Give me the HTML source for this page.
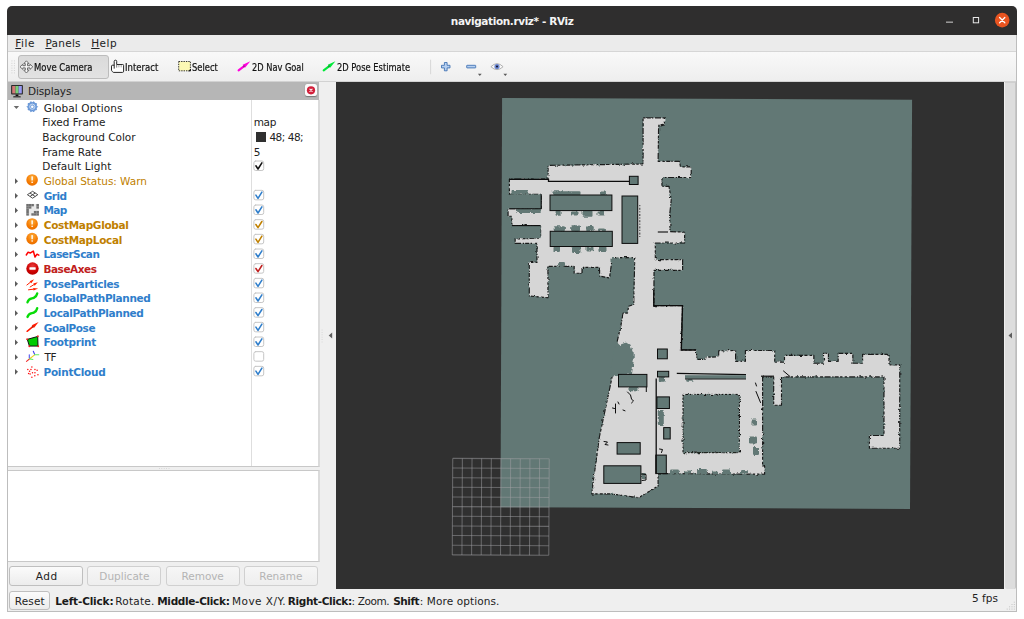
<!DOCTYPE html>
<html>
<head>
<meta charset="utf-8">
<title>navigation.rviz* - RViz</title>
<style>
html,body{margin:0;padding:0;background:#fff;}
body{width:1024px;height:619px;position:relative;overflow:hidden;font-family:"DejaVu Sans","Liberation Sans",sans-serif;font-size:10.5px;color:#222;}
.a{position:absolute;box-sizing:border-box;}
#win{left:7px;top:6px;width:1010px;height:606px;background:#efefef;border-radius:5px 5px 0 0;overflow:hidden;}
#title{left:0;top:0;width:1010px;height:29px;background:#2f2e2e;}
#menubar{left:0;top:29px;width:1010px;height:17px;background:#ebebeb;border-bottom:1px solid #d6d6d6;}
#toolbar{left:0;top:46px;width:1010px;height:30px;background:linear-gradient(#f9f9f9,#eeeeee);border-bottom:1px solid #d2d2d2;}
#view{left:336px;top:82px;width:668px;height:507px;background:#303030;}
#mapsvg,#iconsvg{position:absolute;left:0;top:0;width:1024px;height:619px;}
.btn{border:1px solid #bfbfbf;border-radius:3px;background:linear-gradient(#fbfbfb,#ececec);}
.btn.dis{border-color:#d0d0d0;background:linear-gradient(#f6f6f6,#eeeeee);}
.cb{width:10.6px;height:10.4px;left:253.4px;border:1px solid #c9c9c9;border-radius:2px;background:#fff;}
</style>
</head>
<body>
<div id="win" class="a">
  <div id="title" class="a"></div>
  <div id="menubar" class="a"></div>
  <div id="toolbar" class="a"></div>
</div>
<!-- window frame lines -->
<div class="a" style="left:7px;top:35px;width:1px;height:577px;background:#bdbdbd;"></div>
<div class="a" style="left:1016px;top:35px;width:1px;height:577px;background:#bdbdbd;"></div>
<div class="a" style="left:7px;top:611px;width:1010px;height:1px;background:#bdbdbd;"></div>
<!-- toolbar pressed button -->
<div class="a" style="left:18px;top:55px;width:91px;height:24px;border:1px solid #bcbcbc;border-radius:3px;background:linear-gradient(#dadada,#e2e2e2);"></div>
<!-- displays panel -->
<div class="a" style="left:8px;top:82px;width:311px;height:18px;background:#b6b6b6;"></div>
<div class="a" style="left:8px;top:100px;width:312px;height:367px;background:#fff;border-right:2px solid #dbdbdb;border-bottom:1px solid #c8c8c8;"></div>
<div class="a" style="left:251px;top:100px;width:1px;height:366px;background:#dedede;"></div>
<div class="a" style="left:305px;top:84px;width:12px;height:12px;background:#fafafa;border-radius:2px;box-shadow:0 0.5px 1px rgba(0,0,0,0.35);"></div>
<!-- description box -->
<div class="a" style="left:8px;top:470px;width:312px;height:92px;background:#fff;border-right:2px solid #dbdbdb;border-top:1px solid #c8c8c8;border-bottom:1px solid #c8c8c8;"></div>
<!-- buttons -->
<div class="a btn" style="left:9px;top:566px;width:74px;height:20px;"></div>
<div class="a btn dis" style="left:87px;top:566px;width:74px;height:20px;"></div>
<div class="a btn dis" style="left:166px;top:566px;width:74px;height:20px;"></div>
<div class="a btn dis" style="left:244px;top:566px;width:74px;height:20px;"></div>
<div class="a btn" style="left:9px;top:591px;width:41px;height:19px;"></div>
<!-- right collapsed strip -->
<div class="a" style="left:1005px;top:82px;width:11px;height:507px;background:#dddddd;border-top:1px solid #cfcfcf;border-right:1px solid #c6c6c6;border-radius:0 0 2px 2px;"></div>
<!-- colour swatch -->
<div class="a" style="left:256px;top:132px;width:10px;height:10px;background:#303030;"></div>
<div id="view" class="a"></div>
<svg style="position:absolute;left:0;top:0" width="1024" height="619" viewBox="0 0 1024 619" fill="none" stroke-linecap="round" stroke-linejoin="round">
<rect x="253.9" y="161.00" width="9.8" height="9.5" rx="1.8" fill="#fff" stroke="#c6c6c6" stroke-width="1"/>
<path d="M255.9,165.80 L258,169.00 L261.9,162.80" stroke="#111" stroke-width="1.55"/>
<rect x="253.9" y="190.33" width="9.8" height="9.5" rx="1.8" fill="#fff" stroke="#c6c6c6" stroke-width="1"/>
<path d="M255.9,195.13 L258,198.33 L261.9,192.13" stroke="#2f7ecb" stroke-width="1.55"/>
<rect x="253.9" y="205.00" width="9.8" height="9.5" rx="1.8" fill="#fff" stroke="#c6c6c6" stroke-width="1"/>
<path d="M255.9,209.80 L258,213.00 L261.9,206.80" stroke="#2f7ecb" stroke-width="1.55"/>
<rect x="253.9" y="219.67" width="9.8" height="9.5" rx="1.8" fill="#fff" stroke="#c6c6c6" stroke-width="1"/>
<path d="M255.9,224.47 L258,227.67 L261.9,221.47" stroke="#c08000" stroke-width="1.55"/>
<rect x="253.9" y="234.33" width="9.8" height="9.5" rx="1.8" fill="#fff" stroke="#c6c6c6" stroke-width="1"/>
<path d="M255.9,239.13 L258,242.33 L261.9,236.13" stroke="#c08000" stroke-width="1.55"/>
<rect x="253.9" y="249.00" width="9.8" height="9.5" rx="1.8" fill="#fff" stroke="#c6c6c6" stroke-width="1"/>
<path d="M255.9,253.80 L258,257.00 L261.9,250.80" stroke="#2f7ecb" stroke-width="1.55"/>
<rect x="253.9" y="263.67" width="9.8" height="9.5" rx="1.8" fill="#fff" stroke="#c6c6c6" stroke-width="1"/>
<path d="M255.9,268.47 L258,271.67 L261.9,265.47" stroke="#c02020" stroke-width="1.55"/>
<rect x="253.9" y="278.34" width="9.8" height="9.5" rx="1.8" fill="#fff" stroke="#c6c6c6" stroke-width="1"/>
<path d="M255.9,283.14 L258,286.34 L261.9,280.14" stroke="#2f7ecb" stroke-width="1.55"/>
<rect x="253.9" y="293.00" width="9.8" height="9.5" rx="1.8" fill="#fff" stroke="#c6c6c6" stroke-width="1"/>
<path d="M255.9,297.80 L258,301.00 L261.9,294.80" stroke="#2f7ecb" stroke-width="1.55"/>
<rect x="253.9" y="307.67" width="9.8" height="9.5" rx="1.8" fill="#fff" stroke="#c6c6c6" stroke-width="1"/>
<path d="M255.9,312.47 L258,315.67 L261.9,309.47" stroke="#2f7ecb" stroke-width="1.55"/>
<rect x="253.9" y="322.34" width="9.8" height="9.5" rx="1.8" fill="#fff" stroke="#c6c6c6" stroke-width="1"/>
<path d="M255.9,327.14 L258,330.34 L261.9,324.14" stroke="#2f7ecb" stroke-width="1.55"/>
<rect x="253.9" y="337.00" width="9.8" height="9.5" rx="1.8" fill="#fff" stroke="#c6c6c6" stroke-width="1"/>
<path d="M255.9,341.80 L258,345.00 L261.9,338.80" stroke="#2f7ecb" stroke-width="1.55"/>
<rect x="253.9" y="351.67" width="9.8" height="9.5" rx="1.8" fill="#fff" stroke="#c6c6c6" stroke-width="1"/>
<rect x="253.9" y="366.34" width="9.8" height="9.5" rx="1.8" fill="#fff" stroke="#c6c6c6" stroke-width="1"/>
<path d="M255.9,371.14 L258,374.34 L261.9,368.14" stroke="#2f7ecb" stroke-width="1.55"/>
</svg>
<style>
.t{position:absolute;white-space:nowrap;line-height:14px;font-family:'DejaVu Sans','Liberation Sans',sans-serif;color:#222222;}
u{text-decoration:underline;text-underline-offset:0.8px;text-decoration-thickness:1px;}
</style>
<div class="t" id="t0" style="left:450.80px;top:13.50px;font-size:10.5px;font-weight:700;color:#f4f4f4;letter-spacing:-0.390px;">navigation.rviz* - RViz</div>
<div class="t" id="t1" style="left:15.30px;top:35.90px;font-size:10.5px;letter-spacing:0.500px;"><u>F</u>ile</div>
<div class="t" id="t2" style="left:45.40px;top:35.90px;font-size:10.5px;letter-spacing:0.269px;"><u>P</u>anels</div>
<div class="t" id="t3" style="left:91.20px;top:35.90px;font-size:10.5px;letter-spacing:0.468px;"><u>H</u>elp</div>
<div class="t" id="t4" style="left:33.72px;top:60.50px;font-size:10.1px;font-family:'DejaVu Sans Condensed','DejaVu Sans','Liberation Sans',sans-serif;transform:scaleX(0.9291);transform-origin:0 0;color:#111;-webkit-text-stroke:0.2px #111;">Move Camera</div>
<div class="t" id="t5" style="left:125.12px;top:60.50px;font-size:10.1px;font-family:'DejaVu Sans Condensed','DejaVu Sans','Liberation Sans',sans-serif;transform:scaleX(0.9389);transform-origin:0 0;color:#111;-webkit-text-stroke:0.2px #111;">Interact</div>
<div class="t" id="t6" style="left:192.02px;top:60.50px;font-size:10.1px;font-family:'DejaVu Sans Condensed','DejaVu Sans','Liberation Sans',sans-serif;transform:scaleX(0.9231);transform-origin:0 0;color:#111;-webkit-text-stroke:0.2px #111;">Select</div>
<div class="t" id="t7" style="left:251.92px;top:60.50px;font-size:10.1px;font-family:'DejaVu Sans Condensed','DejaVu Sans','Liberation Sans',sans-serif;transform:scaleX(0.9079);transform-origin:0 0;color:#111;-webkit-text-stroke:0.2px #111;">2D Nav Goal</div>
<div class="t" id="t8" style="left:337.12px;top:60.50px;font-size:10.1px;font-family:'DejaVu Sans Condensed','DejaVu Sans','Liberation Sans',sans-serif;transform:scaleX(0.9181);transform-origin:0 0;color:#111;-webkit-text-stroke:0.2px #111;">2D Pose Estimate</div>
<div class="t" id="t9" style="left:27.90px;top:84.00px;font-size:10.5px;letter-spacing:-0.097px;">Displays</div>
<div class="t" id="t10" style="left:43.69px;top:100.50px;font-size:10.5px;letter-spacing:0.111px;">Global Options</div>
<div class="t" id="t11" style="left:42.20px;top:115.17px;font-size:10.5px;letter-spacing:0.008px;">Fixed Frame</div>
<div class="t" id="t12" style="left:42.20px;top:129.83px;font-size:10.5px;">Background Color</div>
<div class="t" id="t13" style="left:42.20px;top:144.50px;font-size:10.5px;letter-spacing:-0.080px;">Frame Rate</div>
<div class="t" id="t14" style="left:42.20px;top:159.17px;font-size:10.5px;letter-spacing:0.104px;">Default Light</div>
<div class="t" id="t15" style="left:43.69px;top:173.83px;font-size:10.5px;color:#c08000;letter-spacing:-0.050px;">Global Status: Warn</div>
<div class="t" id="t16" style="left:43.79px;top:188.50px;font-size:10.5px;font-weight:700;color:#2f7ecb;letter-spacing:-0.527px;">Grid</div>
<div class="t" id="t17" style="left:43.44px;top:203.17px;font-size:10.5px;font-weight:700;color:#2f7ecb;letter-spacing:-0.600px;">Map</div>
<div class="t" id="t18" style="left:43.79px;top:217.84px;font-size:10.5px;font-weight:700;color:#c08000;letter-spacing:-0.312px;">CostMapGlobal</div>
<div class="t" id="t19" style="left:43.79px;top:232.50px;font-size:10.5px;font-weight:700;color:#c08000;letter-spacing:-0.323px;">CostMapLocal</div>
<div class="t" id="t20" style="left:43.44px;top:247.17px;font-size:10.5px;font-weight:700;color:#2f7ecb;letter-spacing:-0.532px;">LaserScan</div>
<div class="t" id="t21" style="left:43.44px;top:261.84px;font-size:10.5px;font-weight:700;color:#c02020;letter-spacing:-0.452px;">BaseAxes</div>
<div class="t" id="t22" style="left:43.44px;top:276.50px;font-size:10.5px;font-weight:700;color:#2f7ecb;letter-spacing:-0.305px;">PoseParticles</div>
<div class="t" id="t23" style="left:43.79px;top:291.17px;font-size:10.5px;font-weight:700;color:#2f7ecb;letter-spacing:-0.346px;">GlobalPathPlanned</div>
<div class="t" id="t24" style="left:43.44px;top:305.84px;font-size:10.5px;font-weight:700;color:#2f7ecb;letter-spacing:-0.357px;">LocalPathPlanned</div>
<div class="t" id="t25" style="left:43.79px;top:320.50px;font-size:10.5px;font-weight:700;color:#2f7ecb;letter-spacing:-0.439px;">GoalPose</div>
<div class="t" id="t26" style="left:43.44px;top:335.17px;font-size:10.5px;font-weight:700;color:#2f7ecb;letter-spacing:-0.281px;">Footprint</div>
<div class="t" id="t27" style="left:44.44px;top:349.84px;font-size:10.5px;letter-spacing:-0.357px;">TF</div>
<div class="t" id="t28" style="left:43.44px;top:364.51px;font-size:10.5px;font-weight:700;color:#2f7ecb;letter-spacing:-0.244px;">PointCloud</div>
<div class="t" id="t29" style="left:253.64px;top:115.17px;font-size:10.5px;letter-spacing:-0.238px;">map</div>
<div class="t" id="t30" style="left:269.43px;top:129.83px;font-size:10.5px;letter-spacing:-0.483px;">48; 48;</div>
<div class="t" id="t31" style="left:253.80px;top:144.50px;font-size:10.5px;">5</div>
<div class="t" id="t32" style="left:35.74px;top:568.90px;font-size:10.5px;letter-spacing:0.500px;">Add</div>
<div class="t" id="t33" style="left:99.30px;top:568.90px;font-size:10.5px;color:#b4b4b4;letter-spacing:0.013px;">Duplicate</div>
<div class="t" id="t34" style="left:181.60px;top:568.90px;font-size:10.5px;color:#b4b4b4;letter-spacing:-0.075px;">Remove</div>
<div class="t" id="t35" style="left:259.30px;top:568.90px;font-size:10.5px;color:#b4b4b4;letter-spacing:0.021px;">Rename</div>
<div class="t" id="t36" style="left:14.70px;top:593.80px;font-size:10.5px;letter-spacing:0.168px;">Reset</div>
<div class="t" id="t37" style="left:55.24px;top:593.80px;font-size:10.5px;font-weight:700;color:#1a1a1a;letter-spacing:-0.170px;">Left-Click:</div>
<div class="t" id="t38" style="left:115.30px;top:593.80px;font-size:10.5px;letter-spacing:0.214px;">Rotate.</div>
<div class="t" id="t39" style="left:157.24px;top:593.80px;font-size:10.5px;font-weight:700;color:#1a1a1a;letter-spacing:-0.321px;">Middle-Click:</div>
<div class="t" id="t40" style="left:232.00px;top:593.80px;font-size:10.5px;letter-spacing:0.473px;">Move X/Y.</div>
<div class="t" id="t41" style="left:287.84px;top:593.80px;font-size:10.5px;font-weight:700;color:#1a1a1a;letter-spacing:-0.369px;">Right-Click:</div>
<div class="t" id="t42" style="left:351.57px;top:593.80px;font-size:10.5px;letter-spacing:-0.395px;">: Zoom.</div>
<div class="t" id="t43" style="left:393.17px;top:593.80px;font-size:10.5px;font-weight:700;color:#1a1a1a;letter-spacing:-0.444px;">Shift</div>
<div class="t" id="t44" style="left:419.77px;top:593.80px;font-size:10.5px;letter-spacing:0.101px;">: More options.</div>
<div class="t" id="t45" style="left:972.10px;top:591.30px;font-size:10.5px;letter-spacing:-0.010px;">5 fps</div>
<svg id="iconsvg" viewBox="0 0 1024 619" width="1024" height="619">
<defs>
<radialGradient id="gw" cx="0.5" cy="0.3" r="0.8"><stop offset="0" stop-color="#fcaf3e"/><stop offset="0.6" stop-color="#f57900"/><stop offset="1" stop-color="#e06a00"/></radialGradient>
<radialGradient id="ge" cx="0.5" cy="0.3" r="0.8"><stop offset="0" stop-color="#e83a3a"/><stop offset="0.6" stop-color="#cc0000"/><stop offset="1" stop-color="#a80000"/></radialGradient>
</defs>
<rect x="946" y="21.6" width="7" height="1.1" fill="#c4c4c4"/>
<rect x="973.3" y="17.5" width="5.3" height="5.3" fill="none" stroke="#e8e8e8" stroke-width="1"/>
<circle cx="1002.2" cy="20.1" r="7.3" fill="#e95420"/>
<path d="M999.6,17.5 L1004.8,22.7 M1004.8,17.5 L999.6,22.7" stroke="#fff" stroke-width="1.3" stroke-linecap="round"/>
<rect x="11.4" y="60.4" width="1" height="1" fill="#d2d2d2"/>
<rect x="13.9" y="60.4" width="1" height="1" fill="#d2d2d2"/>
<rect x="11.4" y="62.8" width="1" height="1" fill="#d2d2d2"/>
<rect x="13.9" y="62.8" width="1" height="1" fill="#d2d2d2"/>
<rect x="11.4" y="65.2" width="1" height="1" fill="#d2d2d2"/>
<rect x="13.9" y="65.2" width="1" height="1" fill="#d2d2d2"/>
<rect x="11.4" y="67.6" width="1" height="1" fill="#d2d2d2"/>
<rect x="13.9" y="67.6" width="1" height="1" fill="#d2d2d2"/>
<rect x="11.4" y="70.0" width="1" height="1" fill="#d2d2d2"/>
<rect x="13.9" y="70.0" width="1" height="1" fill="#d2d2d2"/>
<rect x="11.4" y="72.4" width="1" height="1" fill="#d2d2d2"/>
<rect x="13.9" y="72.4" width="1" height="1" fill="#d2d2d2"/>
<g transform="translate(26.4,66.8)" fill="#f6f6f6" stroke="#6c6c6c" stroke-width="1" stroke-linejoin="round"><path d="M0,-6 L2.6,-3.2 L1.1,-3.2 L1.1,-1.1 L3.6,-1.1 L3.6,-2.6 L6.4,0 L3.6,2.6 L3.6,1.1 L1.1,1.1 L1.1,3.4 L2.6,3.4 L0,6.2 L-2.6,3.4 L-1.1,3.4 L-1.1,1.1 L-3.6,1.1 L-3.6,2.6 L-6.4,0 L-3.6,-2.6 L-3.6,-1.1 L-1.1,-1.1 L-1.1,-3.2 L-2.6,-3.2 Z"/></g>
<g fill="#fff" stroke="#262626" stroke-width="1" stroke-linejoin="round"><path d="M114.2,65.2 L114.2,61.3 Q114.2,60.2 115.45,60.2 Q116.7,60.2 116.7,61.3 L116.7,64.5 L122.7,64.5 Q123.6,64.5 123.6,65.4 L123.6,71.2 Q123.6,72.4 122.6,72.4 L113.6,72.4 Q112.8,72.4 112.5,71.7 L111.5,70.3 L111.5,66.1 Q111.5,65.2 112.6,65.2 Z"/><path d="M114.2,65 V68.6" fill="none"/><path d="M116.7,64.6 V67.6" fill="none" stroke="#555" stroke-width="0.8"/><path d="M118.9,64.8 V67.4 M121.2,64.8 V67.4" fill="none" stroke="#8a8a8a" stroke-width="0.8"/></g>
<rect x="178.7" y="61.5" width="11.7" height="9.3" fill="#fcf8b4" stroke="#222" stroke-width="0.9" stroke-dasharray="1.4 1"/>
<path d="M190.9,68.6 L190.9,71.3 L188.2,71.3 Z" fill="#111"/>
<path d="M238.60,70.40 L243.87,66.31" stroke="#ff00dd" stroke-width="2.1" stroke-linecap="round"/><path d="M250.30,61.30 L245.03,67.80 L242.70,64.81 Z" fill="#ff00dd"/><circle cx="243.87" cy="66.31" r="1.1" fill="#70206a" opacity="0.55"/>
<path d="M323.70,70.40 L328.96,66.31" stroke="#00e838" stroke-width="2.1" stroke-linecap="round"/><path d="M335.40,61.30 L330.13,67.80 L327.80,64.81 Z" fill="#00e838"/><circle cx="328.96" cy="66.31" r="1.1" fill="#207030" opacity="0.55"/>
<rect x="430.2" y="59.7" width="0.9" height="14.5" fill="#d4d4d4"/>
<path d="M444.4,62.5 h2.7 v2.8 h2.9 v2.6 h-2.9 v2.9 h-2.7 v-2.9 h-2.9 v-2.6 h2.9 z" fill="#b7d0f0" stroke="#3a6db0" stroke-width="0.85" stroke-linejoin="round"/>
<rect x="466.7" y="65.3" width="9" height="2.6" rx="0.4" fill="#b7d0f0" stroke="#3a6db0" stroke-width="0.85"/>
<path d="M477.9,73.7 h3.8 l-1.9,2.3 z" fill="#5a5a5a"/>
<path d="M503.4,73.7 h3.8 l-1.9,2.3 z" fill="#5a5a5a"/>
<path d="M490.9,66.7 Q497,60.6 503.1,66.7 Q497,72.6 490.9,66.7 Z" fill="#f8f8f8" stroke="#a8a8a8" stroke-width="0.9"/>
<circle cx="497" cy="66.5" r="2.6" fill="#6a86cf"/>
<circle cx="497" cy="66.5" r="1.05" fill="#10102a"/>
<rect x="11.1" y="84.9" width="11.8" height="9.6" rx="0.8" fill="#2a2a2a"/>
<rect x="12.2" y="86" width="3.3" height="7.4" fill="#d27878"/>
<rect x="15.5" y="86" width="3.1" height="7.4" fill="#78d078"/>
<rect x="18.6" y="86" width="3.2" height="7.4" fill="#9a9af4"/>
<rect x="15.6" y="94.5" width="2.8" height="1.6" fill="#111"/>
<rect x="13.2" y="96.1" width="7.6" height="1.5" rx="0.6" fill="#444"/>
<circle cx="311" cy="90.3" r="4.1" fill="#d21f3a"/>
<path d="M309.9,89.2 L312.1,91.4 M312.1,89.2 L309.9,91.4" stroke="#fff" stroke-width="1.1" stroke-linecap="round"/>
<path d="M328.7,335.4 L332.2,332.4 L332.2,338.4 Z" fill="#5e5e5e"/>
<path d="M1008.5,335.4 L1012,332.4 L1012,338.4 Z" fill="#5e5e5e"/>
<rect x="321.4" y="329.6" width="1.4" height="0.8" fill="#dadada"/>
<rect x="321.4" y="332.0" width="1.4" height="0.8" fill="#dadada"/>
<rect x="321.4" y="334.4" width="1.4" height="0.8" fill="#dadada"/>
<rect x="321.4" y="336.8" width="1.4" height="0.8" fill="#dadada"/>
<rect x="321.4" y="339.2" width="1.4" height="0.8" fill="#dadada"/>
<rect x="321.4" y="341.6" width="1.4" height="0.8" fill="#dadada"/>
<rect x="159.0" y="468" width="0.8" height="0.9" fill="#cfcfcf"/>
<rect x="161.4" y="468" width="0.8" height="0.9" fill="#cfcfcf"/>
<rect x="163.8" y="468" width="0.8" height="0.9" fill="#cfcfcf"/>
<rect x="166.2" y="468" width="0.8" height="0.9" fill="#cfcfcf"/>
<rect x="168.6" y="468" width="0.8" height="0.9" fill="#cfcfcf"/>
<path d="M13.7,105.9 L19.1,105.9 L16.4,109 Z" fill="#6a6a6a"/>
<path d="M15,178.23 L18,181.13 L15,184.03 Z" fill="#5c5c5c"/>
<path d="M15,192.90 L18,195.80 L15,198.70 Z" fill="#5c5c5c"/>
<path d="M15,207.57 L18,210.47 L15,213.37 Z" fill="#5c5c5c"/>
<path d="M15,222.24 L18,225.14 L15,228.04 Z" fill="#5c5c5c"/>
<path d="M15,236.90 L18,239.80 L15,242.70 Z" fill="#5c5c5c"/>
<path d="M15,251.57 L18,254.47 L15,257.37 Z" fill="#5c5c5c"/>
<path d="M15,266.24 L18,269.14 L15,272.04 Z" fill="#5c5c5c"/>
<path d="M15,280.90 L18,283.80 L15,286.70 Z" fill="#5c5c5c"/>
<path d="M15,295.57 L18,298.47 L15,301.37 Z" fill="#5c5c5c"/>
<path d="M15,310.24 L18,313.14 L15,316.04 Z" fill="#5c5c5c"/>
<path d="M15,324.91 L18,327.80 L15,330.70 Z" fill="#5c5c5c"/>
<path d="M15,339.57 L18,342.47 L15,345.37 Z" fill="#5c5c5c"/>
<path d="M15,354.24 L18,357.14 L15,360.04 Z" fill="#5c5c5c"/>
<path d="M15,368.91 L18,371.81 L15,374.71 Z" fill="#5c5c5c"/>
<polygon points="37.60,106.70 36.29,108.00 36.59,109.82 34.77,110.10 33.94,111.74 32.30,110.90 30.66,111.74 29.83,110.10 28.01,109.82 28.31,108.00 27.00,106.70 28.31,105.40 28.01,103.58 29.83,103.30 30.66,101.66 32.30,102.50 33.94,101.66 34.77,103.30 36.59,103.58 36.29,105.40" fill="#6f9ddb" stroke="#4a7fcb" stroke-width="0.6"/>
<circle cx="32.3" cy="106.7" r="2.6" fill="none" stroke="#dbe6f6" stroke-width="0.8"/>
<circle cx="32.3" cy="106.7" r="1.3" fill="#fff"/>
<circle cx="32.1" cy="179.93" r="5.8" fill="url(#gw)"/>
<rect x="31.4" y="176.33" width="1.5" height="4.2" rx="0.5" fill="#fff" opacity="0.95"/>
<rect x="31.4" y="181.53" width="1.5" height="1.5" rx="0.4" fill="#fff" opacity="0.95"/>
<circle cx="32.1" cy="223.94" r="5.8" fill="url(#gw)"/>
<rect x="31.4" y="220.34" width="1.5" height="4.2" rx="0.5" fill="#fff" opacity="0.95"/>
<rect x="31.4" y="225.54" width="1.5" height="1.5" rx="0.4" fill="#fff" opacity="0.95"/>
<circle cx="32.1" cy="238.60" r="5.8" fill="url(#gw)"/>
<rect x="31.4" y="235.00" width="1.5" height="4.2" rx="0.5" fill="#fff" opacity="0.95"/>
<rect x="31.4" y="240.20" width="1.5" height="1.5" rx="0.4" fill="#fff" opacity="0.95"/>
<g fill="none" stroke="#3c3c3c" stroke-width="0.9" stroke-linejoin="round"><path d="M27.4,194.70 L32.6,191.30 L37.8,194.70 L32.6,198.20 Z"/><path d="M30,193.00 L35.2,196.50 M35.2,193.00 L30,196.50"/></g>
<rect x="26.3" y="203.97" width="12.6" height="11.6" fill="#e9e9e9"/>
<rect x="26.30" y="203.97" width="2.55" height="2.35" fill="#707070"/>
<rect x="28.82" y="203.97" width="2.55" height="2.35" fill="#707070"/>
<rect x="31.34" y="203.97" width="2.55" height="2.35" fill="#707070"/>
<rect x="36.38" y="203.97" width="2.55" height="2.35" fill="#707070"/>
<rect x="26.30" y="206.29" width="2.55" height="2.35" fill="#707070"/>
<rect x="28.82" y="206.29" width="2.55" height="2.35" fill="#707070"/>
<rect x="36.38" y="206.29" width="2.55" height="2.35" fill="#707070"/>
<rect x="26.30" y="208.61" width="2.55" height="2.35" fill="#707070"/>
<rect x="26.30" y="210.93" width="2.55" height="2.35" fill="#707070"/>
<rect x="33.86" y="210.93" width="2.55" height="2.35" fill="#707070"/>
<rect x="36.38" y="210.93" width="2.55" height="2.35" fill="#707070"/>
<rect x="26.30" y="213.25" width="2.55" height="2.35" fill="#707070"/>
<rect x="31.34" y="213.25" width="2.55" height="2.35" fill="#707070"/>
<rect x="33.86" y="213.25" width="2.55" height="2.35" fill="#707070"/>
<rect x="36.38" y="213.25" width="2.55" height="2.35" fill="#707070"/>
<path d="M26.3,254.97 L28.1,252.17 L30.5,252.97 L33.3,251.07 L35,256.97 L37,254.17 L38.8,255.17" fill="none" stroke="#f00" stroke-width="1.5" stroke-linejoin="round" stroke-linecap="round"/>
<circle cx="32.5" cy="268.54" r="6.2" fill="url(#ge)"/>
<rect x="29.4" y="267.34" width="6.3" height="2.3" rx="0.4" fill="#fff"/>
<path d="M26.90,285.00 L30.50,282.15" stroke="#ff2000" stroke-width="1.0" stroke-linecap="round"/><path d="M34.10,279.30 L31.31,283.17 L29.69,281.13 Z" fill="#ff2000"/>
<path d="M30.10,287.00 L33.95,284.60" stroke="#ff2000" stroke-width="1.0" stroke-linecap="round"/><path d="M37.80,282.20 L34.64,285.71 L33.26,283.50 Z" fill="#ff2000"/>
<path d="M28.50,289.80 L33.35,289.20" stroke="#ff2000" stroke-width="1.0" stroke-linecap="round"/><path d="M38.20,288.60 L33.51,290.49 L33.19,287.91 Z" fill="#ff2000"/>
<path d="M27.5,302.27 C28.8,297.87 31.5,298.87 33.8,297.87 C36,296.87 36.8,295.47 37.2,293.47" fill="none" stroke="#08dc08" stroke-width="2.4" stroke-linecap="round"/>
<path d="M27.5,316.94 C28.8,312.54 31.5,313.54 33.8,312.54 C36,311.54 36.8,310.14 37.2,308.14" fill="none" stroke="#08dc08" stroke-width="2.4" stroke-linecap="round"/>
<path d="M27.10,331.31 L32.85,326.65" stroke="#ff1a00" stroke-width="1.5" stroke-linecap="round"/><path d="M38.60,322.00 L33.92,327.98 L31.78,325.33 Z" fill="#ff1a00"/>
<circle cx="32.6" cy="326.81" r="0.9" fill="#802010" opacity="0.6"/>
<polygon points="27.3,339.37 37.7,336.47 38,346.07 29.4,346.07" fill="#00cc00" stroke="#101010" stroke-width="1" stroke-linejoin="round"/>
<circle cx="27.10" cy="339.17" r="0.9" fill="#f02020"/>
<circle cx="37.90" cy="336.27" r="0.9" fill="#f02020"/>
<circle cx="38.20" cy="346.27" r="0.9" fill="#f02020"/>
<circle cx="29.30" cy="346.27" r="0.9" fill="#f02020"/>
<g stroke-width="1.1" stroke-linecap="round" fill="none" transform="translate(0,-0.99)"><path d="M26.5,362.3 L29.7,359.7" stroke="#f03030"/><path d="M29.7,359.7 L34.6,355.8" stroke="#f0d020"/><path d="M29.3,355.8 L29.3,359.1" stroke="#5050f0"/><path d="M33.3,352.2 L34.6,355.2" stroke="#4040f0"/><path d="M34.6,355.8 L38.8,355.8" stroke="#60f060"/><path d="M29.7,359.9 L32.9,360.5" stroke="#60f060"/></g>
<circle cx="31.88" cy="366.98" r="0.75" fill="#ff1010"/>
<circle cx="27.84" cy="369.41" r="0.75" fill="#ff1010"/>
<circle cx="30.91" cy="369.57" r="0.75" fill="#ff1010"/>
<circle cx="34.96" cy="369.41" r="0.75" fill="#ff1010"/>
<circle cx="37.14" cy="370.22" r="0.75" fill="#ff1010"/>
<circle cx="29.54" cy="371.35" r="0.75" fill="#ff1010"/>
<circle cx="32.53" cy="372.64" r="0.75" fill="#ff1010"/>
<circle cx="34.96" cy="372.80" r="0.75" fill="#ff1010"/>
<circle cx="28.65" cy="373.61" r="0.75" fill="#ff1010"/>
<circle cx="30.11" cy="374.02" r="0.75" fill="#ff1010"/>
<circle cx="37.95" cy="374.82" r="0.75" fill="#ff1010"/>
<circle cx="34.79" cy="375.79" r="0.75" fill="#ff1010"/>
<circle cx="31.88" cy="377.25" r="0.75" fill="#ff1010"/>
<rect x="1013.8" y="601.7" width="1" height="1" fill="#c4c4c4"/>
<rect x="1011.5" y="604.0" width="1" height="1" fill="#c4c4c4"/>
<rect x="1013.8" y="604.0" width="1" height="1" fill="#c4c4c4"/>
<rect x="1009.1" y="606.3" width="1" height="1" fill="#c4c4c4"/>
<rect x="1011.5" y="606.3" width="1" height="1" fill="#c4c4c4"/>
<rect x="1013.8" y="606.3" width="1" height="1" fill="#c4c4c4"/>
<rect x="1006.7" y="608.6" width="1" height="1" fill="#c4c4c4"/>
<rect x="1009.1" y="608.6" width="1" height="1" fill="#c4c4c4"/>
<rect x="1011.5" y="608.6" width="1" height="1" fill="#c4c4c4"/>
<rect x="1013.8" y="608.6" width="1" height="1" fill="#c4c4c4"/>
</svg>
<svg id="mapsvg" viewBox="0 0 1024 619" width="1024" height="619">
<defs>
<filter id="rough" x="-2%" y="-2%" width="104%" height="104%" filterUnits="objectBoundingBox">
  <feTurbulence type="fractalNoise" baseFrequency="0.22" numOctaves="2" seed="7" result="n"/>
  <feDisplacementMap in="SourceGraphic" in2="n" scale="2.6" xChannelSelector="R" yChannelSelector="G"/>
</filter>
<filter id="rough2" x="-20%" y="-20%" width="140%" height="140%">
  <feTurbulence type="fractalNoise" baseFrequency="0.3" numOctaves="2" seed="3" result="n"/>
  <feDisplacementMap in="SourceGraphic" in2="n" scale="3.2" xChannelSelector="R" yChannelSelector="G"/>
</filter>
</defs>
<polygon points="502.1,97.9 912.1,99.8 910,509 500.5,507.2" fill="#627875"/>
<path fill="#d6d6d6" stroke="#0c0c0c" stroke-opacity="0.9" stroke-width="1.15" stroke-dasharray="2.4 1.4 4 1.1 1.3 1.7 6 1.5 3 2.2" stroke-linejoin="round" filter="url(#rough)" d="
M643.1,117.8 L664.4,117.8 L664.4,125 L658.6,126.3 L658.1,161.3 L679.4,161.3 L680.5,166.9 L691.2,166.9 L691.2,177.5
L661.9,177.5 L661.9,186.4 L669,186.4 L671.2,200 L669.6,215 L670,231.6 L684.6,232.2 L684.6,243 L655.3,243 L655.3,259.6 L682.6,259.6 L682.6,270.3
L654,270.3 L653.8,305.6 L682.5,305.6 L681.3,350 L696.3,350 L696.9,359.4 L705,359.4 L706.2,357.2 L718.7,357 L718.7,350.8
L735.6,350.5 L735.6,361.3 L745.4,361.3 L745.4,350.5 L774.7,350.5 L774.7,362.2 L784.5,362.2 L784.5,355.4 L813.8,355.4 L813.8,363.2 L823.5,363.2 L823.5,353.4
L828.4,353.4 L828.4,361.3 L838.2,361.3 L838.2,353.4 L852.8,353.4 L852.8,363.2 L862.6,363.2 L862.6,354.4 L889,354.4 L889,364.8 L899.7,364.8
L899.7,448.2 L869.4,448.2 L869.4,435.5 L884,435.5 L884,376.9 L781.5,376.9 L781.5,405.2 L773.7,405.2 L773.7,377 L762.6,377
L762.6,466 L764.6,466 L764.6,474.2 L666.3,473.6 L658,474 L658.1,486 L638.6,497.7 L611,493.8 L591.7,493.8 L599.4,437 L607.3,400 L613.7,369.5 L617.5,340
L620.6,327.5 L623.1,313.1 L627.5,313.1 L628.7,306.2 L633.7,304.4
L634.8,257.6 L615.2,257.6 L612,260 L609.4,278 L599.6,276 L599.6,267.4 L582,267.4 L582,273.2 L574.2,273.2 L574.2,266.4 L547.9,266.4 L547.9,297.7 L529.3,296 L529.3,262.5
L537,262.5 L537,243.4 L515.2,243.4 L515.2,239 L540.6,238.1 L540.6,225.6 L511.9,225.6 L511.9,216.2 L508.1,216.2 L508.1,208.8 L541.2,208.6 L541.2,194.4 L509.4,194.4 L509.4,179
L548.1,179 L548.1,165.4 L642.6,164 L643.1,163 Z"/>
<path d="M609.5,377 L615.3,340 L619.4,345 L626,342.5 L630,345 L633.7,352.5 L633.7,361 L632,374 Z" fill="#627875" filter="url(#rough2)"/>
<g fill="#627875" filter="url(#rough2)">
<rect x="510.5" y="190" width="18" height="4.5" rx="1.2"/>
<rect x="552.5" y="191.3" width="28" height="4" rx="1.2"/>
<rect x="600" y="191.5" width="6" height="3.5" rx="1.2"/>
<rect x="555.6" y="210.6" width="5" height="5.2" rx="1.2"/>
<rect x="571" y="210.6" width="6.5" height="5" rx="1.2"/>
<rect x="582.5" y="210.6" width="10" height="6.2" rx="1.2"/>
<rect x="597.5" y="210.6" width="6.5" height="4.8" rx="1.2"/>
<rect x="516" y="208.8" width="25" height="4.2" rx="1.2"/>
<rect x="553.7" y="226.2" width="11.2" height="5" rx="1.2"/>
<rect x="571.2" y="225.2" width="8.8" height="6" rx="1.2"/>
<rect x="586.2" y="226" width="7.5" height="5.3" rx="1.2"/>
<rect x="598" y="228.5" width="8" height="2.8" rx="1.2"/>
<rect x="553.5" y="246.5" width="6.5" height="5.5" rx="1.2"/>
<rect x="572" y="246.5" width="8.5" height="6.5" rx="1.2"/>
<rect x="586.5" y="246.5" width="7" height="5" rx="1.2"/>
<rect x="598.5" y="246.5" width="8" height="5.5" rx="1.2"/>
<rect x="558" y="262" width="7" height="4.4" rx="1.2"/>
<rect x="610.5" y="258" width="5" height="4.5" rx="1.2"/>
<rect x="628.5" y="386.9" width="10" height="4.4" rx="1.2"/>
<rect x="658.8" y="377.1" width="6.2" height="4.6" rx="1.2"/>
<rect x="657.8" y="410" width="6" height="16" rx="1.2"/>
<rect x="686.2" y="379.1" width="6.5" height="2.6" rx="1.2"/>
<rect x="751.5" y="419.5" width="5.5" height="6" rx="1.2"/>
<rect x="749" y="436.5" width="8" height="7" rx="1.2"/>
<rect x="753" y="447" width="6" height="8" rx="1.2"/>
<rect x="670" y="469.5" width="9" height="5" rx="1.2"/>
<rect x="684" y="470.5" width="7" height="4" rx="1.2"/>
<rect x="697" y="469" width="10" height="5.5" rx="1.2"/>
<rect x="712" y="470.5" width="6" height="4" rx="1.2"/>
<rect x="722" y="469.5" width="9" height="5" rx="1.2"/>
<rect x="741" y="470" width="7" height="4.5" rx="1.2"/>
<rect x="641" y="473" width="5" height="6" rx="1.2"/>
</g>
<rect x="509.4" y="194.4" width="31.8" height="14.3" fill="#627875"/>
<path d="M541.1999999999999,194.4 V208.70000000000002" stroke="#0c0c0c" stroke-width="1.1"/>
<path d="M509.4,208.70000000000002 H541.1999999999999" stroke="#0c0c0c" stroke-width="1.1"/>
<rect x="550" y="195" width="61.9" height="15.6" fill="#627875" stroke="#0c0c0c" stroke-width="1"/>
<rect x="550.2" y="231.3" width="62.1" height="15.2" fill="#627875" stroke="#0c0c0c" stroke-width="1"/>
<rect x="622" y="196" width="15.7" height="47.4" fill="#627875" stroke="#0c0c0c" stroke-width="1"/>
<rect x="629.4" y="176.3" width="8.7" height="8.2" fill="#627875" stroke="#0c0c0c" stroke-width="1"/>
<rect x="618.5" y="374.4" width="28.4" height="12.5" fill="#627875" stroke="#0c0c0c" stroke-width="1"/>
<rect x="657.5" y="349" width="9.8" height="9.8" fill="#627875" stroke="#0c0c0c" stroke-width="1"/>
<rect x="657.5" y="371.3" width="11.2" height="5.6" fill="#627875" stroke="#0c0c0c" stroke-width="1"/>
<rect x="656.9" y="396.9" width="12.5" height="11.6" fill="#627875" stroke="#0c0c0c" stroke-width="1"/>
<rect x="617.1" y="442.6" width="23.1" height="11.5" fill="#627875" stroke="#0c0c0c" stroke-width="1"/>
<rect x="603.8" y="465.8" width="37.1" height="17.6" fill="#627875" stroke="#0c0c0c" stroke-width="1"/>
<rect x="655.8" y="455.1" width="10.5" height="18.5" fill="#627875" stroke="#0c0c0c" stroke-width="1"/>
<rect x="663.7" y="427.6" width="6.5" height="11.4" fill="#627875" stroke="#0c0c0c" stroke-width="1"/>
<rect x="511.9" y="225.6" width="28.7" height="12.5" fill="#627875"/>
<path d="M511.9,225.6 H540.6" stroke="#0c0c0c" stroke-width="1.1"/>
<rect x="683" y="394.4" width="56.4" height="58.3" fill="#627875" stroke="#0c0c0c" stroke-width="1" stroke-dasharray="2.2 1.3" filter="url(#rough2)"/>
<g stroke="#0c0c0c" fill="none">
<path d="M509.4,179.4 H548.5 V181.3 H629.4" stroke-width="1.3"/>
<path d="M656.2,378.5 V473.5" stroke-width="1.3"/>
<path d="M676.8,373.4 L746,374.6" stroke-width="1.3"/>
<path d="M646.3,387 V392" stroke-width="1"/>
<path d="M653.8,290 V305.6 H682.5 L681.3,350 H696" stroke-width="1.4"/>
<path d="M761,376.2 H774" stroke-width="1.2"/>
<path d="M657.8,232 H668" stroke-width="1.1"/>
<path d="M639.8,205 V237" stroke-width="1" stroke-dasharray="1.2 1.6 2 1.4" stroke-opacity="0.8"/>
</g>
<rect x="685" y="375.2" width="61" height="3.6" fill="#627875"/>
<path d="M685,379 H746" stroke="#0c0c0c" stroke-width="0.9"/>
<g stroke="#0c0c0c" stroke-width="1" fill="none" stroke-linecap="round"><path d="M627.5,392 l3,3 l1,4 l2,2 l-2,2"/><path d="M615.5,404 v9"/><path d="M623,410 l2,0.8"/><path d="M612.5,408 l2,0.5"/><path d="M604,441.5 l3.5,0.5 l-2.5,2.5 l3,0.5"/><path d="M659.5,449 l3,0.5 l-1,3"/><path d="M642,474 l4,0.5 l0,5.5 l-4,0.5"/><path d="M618,402 l1,2"/><path d="M783.5,371 l6.5,5.5"/><path d="M756,391.5 l4.5,11"/><path d="M755.5,383 l1,3"/></g>
<g id="grid" stroke="#a0a0a4" stroke-opacity="0.5" stroke-width="1.05" fill="none" transform="rotate(0.26 500.7 506.9)">
<path d="M452.50,458.60 V555.10"/>
<path d="M452.50,458.60 H549.00"/>
<path d="M462.15,458.60 V555.10"/>
<path d="M452.50,468.25 H549.00"/>
<path d="M471.80,458.60 V555.10"/>
<path d="M452.50,477.90 H549.00"/>
<path d="M481.45,458.60 V555.10"/>
<path d="M452.50,487.55 H549.00"/>
<path d="M491.10,458.60 V555.10"/>
<path d="M452.50,497.20 H549.00"/>
<path d="M500.75,458.60 V555.10"/>
<path d="M452.50,506.85 H549.00"/>
<path d="M510.40,458.60 V555.10"/>
<path d="M452.50,516.50 H549.00"/>
<path d="M520.05,458.60 V555.10"/>
<path d="M452.50,526.15 H549.00"/>
<path d="M529.70,458.60 V555.10"/>
<path d="M452.50,535.80 H549.00"/>
<path d="M539.35,458.60 V555.10"/>
<path d="M452.50,545.45 H549.00"/>
<path d="M549.00,458.60 V555.10"/>
<path d="M452.50,555.10 H549.00"/>
</g>
</svg>
</body>
</html>
